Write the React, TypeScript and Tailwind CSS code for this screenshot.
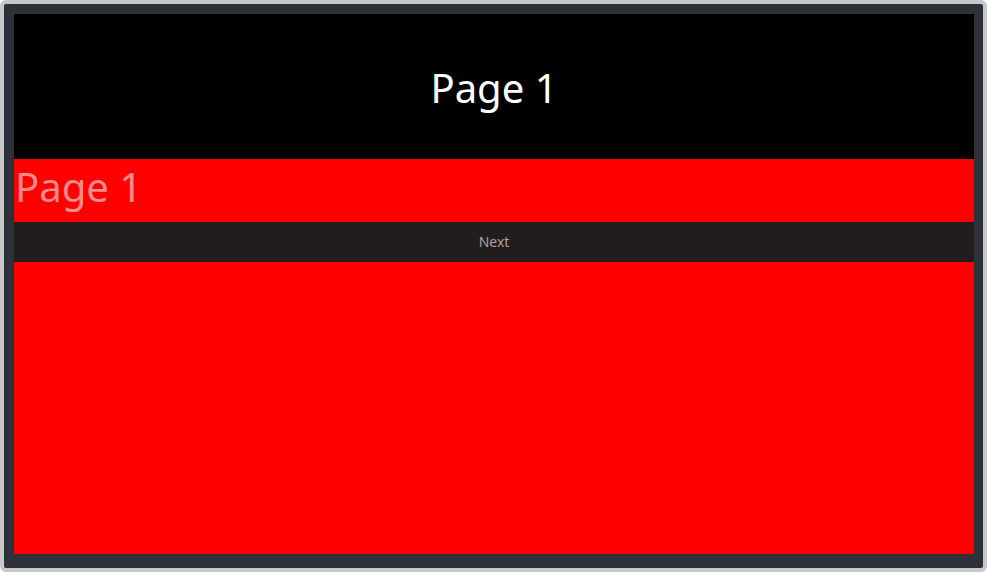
export default function App() {
  return (
    <div className="w-[987px] h-[572px] bg-white">
      <div className="w-full h-full rounded-[6px] border-4 border-[#c7c8ca] bg-[#2e313a] pt-[10px] pl-[10px] pr-[9px] pb-[14px] font-['Noto_Sans',sans-serif]">
        <div className="w-[960px] h-[540px] bg-[#ff0000] flex flex-col">
          <div className="h-[145px] bg-black flex items-center justify-center text-white text-[40px] pt-[2px]">
            Page 1
          </div>
          <div className="h-[63px] text-[#ff8a8a] text-[40px] leading-[56px] pl-[1px]">Page 1</div>
          <div className="h-[40px] bg-[#231c1c] flex items-center justify-center text-[14px] text-[#a8a1a1] pb-[2px]">
            Next
          </div>
        </div>
      </div>
    </div>
  );
}
